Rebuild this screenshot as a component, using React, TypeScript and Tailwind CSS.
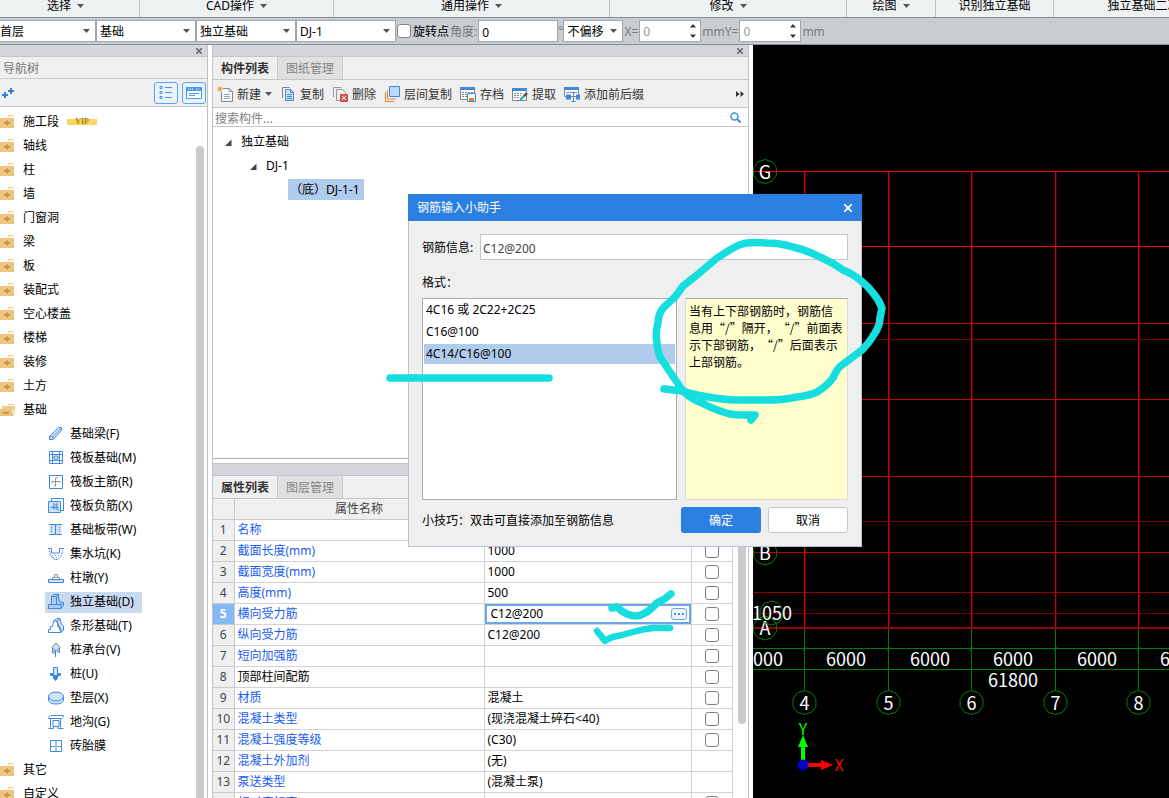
import type { ReactNode } from 'react';

const BLUE = '#4088d8';
const PALE = '#cfe2f7';

interface PropertyRow {
  name: string;
  value: string;
  check: boolean;
  plain?: boolean;
  editing?: boolean;
}

const ribbonGroups = [
  { label: '选择', width: 'w-[140px] pr-2', menu: true },
  { label: 'CAD操作', width: 'w-[194px]', menu: true },
  { label: '通用操作', width: 'w-[276px]', menu: true },
  { label: '修改', width: 'w-[237px]', menu: true },
  { label: '绘图', width: 'w-[89px]', menu: true },
  { label: '识别独立基础', width: 'w-[118px]', menu: false },
  { label: '独立基础二次编辑', width: 'w-[204px]', menu: false },
];

const categories = ['施工段', '轴线', '柱', '墙', '门窗洞', '梁', '板', '装配式', '空心楼盖', '楼梯', '装修', '土方'];

const rows: PropertyRow[] = [
  { name: '名称', value: 'DJ-1-1', check: false },
  { name: '截面长度(mm)', value: '1000', check: true },
  { name: '截面宽度(mm)', value: '1000', check: true },
  { name: '高度(mm)', value: '500', check: true },
  { name: '横向受力筋', value: 'C12@200', check: true, editing: true },
  { name: '纵向受力筋', value: 'C12@200', check: true },
  { name: '短向加强筋', value: '', check: true },
  { name: '顶部柱间配筋', value: '', check: true, plain: true },
  { name: '材质', value: '混凝土', check: true },
  { name: '混凝土类型', value: '(现浇混凝土碎石<40)', check: true },
  { name: '混凝土强度等级', value: '(C30)', check: true },
  { name: '混凝土外加剂', value: '(无)', check: false },
  { name: '泵送类型', value: '(混凝土泵)', check: false },
  { name: '相对底标高(m)', value: '', check: true },
];

function Icon({ children }: { children: ReactNode }) {
  return (
    <svg className="size-4 shrink-0" viewBox="0 0 16 16" fill="none" stroke={BLUE} aria-hidden="true">
      {children}
    </svg>
  );
}

function Caret({ className = '' }: { className?: string }) {
  return (
    <svg className={`h-1 w-[7px] shrink-0 ${className}`} viewBox="0 0 7 4" aria-hidden="true">
      <path d="M0 0h7L3.5 4z" fill="#555" />
    </svg>
  );
}

const foundations = [
  {
    label: '基础梁(F)',
    icon: <><path d="M1.5 10.500 10.500 1.500h3v3L5 13.500H1.500z" fill={PALE} /><path d="M1.500 10.500H5v3M5 10.500l8.500-8.500" strokeWidth=".8" /></>,
  },
  {
    label: '筏板基础(M)',
    icon: <><path d="M1.500 1.500h13v12h-13z" /><path d="M4.500 1.500v12M11.500 1.500v12M1.500 4.500h13M1.500 10.500h13" /><path d="M6 6h4v3H6z" fill={PALE} /></>,
  },
  {
    label: '筏板主筋(R)',
    icon: <><path d="M1.500 1.500h13v13h-13z" /><path d="M9.500 4h-2v8H6M4 9.500v-2h8v1.500" stroke="#8b949c" /></>,
  },
  {
    label: '筏板负筋(X)',
    icon: <><path d="M3.500 3V.5h12v12H13" /><path d="M.5 3.500h12v11H.5z" fill={PALE} /><path d="M4 9h2V5M6 12V9M2.500 9.500h8M9 5v7M7 7h2M9 12h2" /></>,
  },
  {
    label: '基础板带(W)',
    icon: <><path d="M1.500 2.500h12v10h-12z" fill={PALE} stroke="none" /><path d="M1 2.500h13M1 12.500h13M7.500 2.500v10" /><path d="M3.500 5v6M11.500 5v6" strokeDasharray="1 1" /></>,
  },
  {
    label: '集水坑(K)',
    icon: <><path d="M0 2.500h3.500V7h8V2.500H16" /><path d="M1.500 4.500l1 5 3.500 4h4l3.500-4 1-5" strokeDasharray="2 1" /><path d="M4 9.500h8M5 11.500h6" stroke="#8b949c" strokeDasharray="1 2" /></>,
  },
  {
    label: '柱墩(Y)',
    icon: <><path d="M.5 9.500h15v3H.5z" fill={PALE} /><path d="M4.500 9.500v-2h7v2M6.500 7.500v-3h3v3" stroke="#8b949c" /></>,
  },
  {
    label: '独立基础(D)',
    icon: <><path d="M.5 10.500h3v-8l2-2h5l.5 7 4.500 1v3l-2.500 3H.5z" fill="#a9cdf4" /><path d="M3.500 2.500h5l2-2M8.500 2.500v8h4.500v4M3.500 10.500h5M13 10.500l2-2" /></>,
  },
  {
    label: '条形基础(T)',
    icon: <><path d="M9 3l3-2.500 1.500 6 2 1.500v4L13 14.500z" fill={PALE} /><path d="M.5 14.500v-3h2v-3h2l1-5.500L9 .5h3M5.500 3H9l1 6h2v2.500h1v3H.5" /></>,
  },
  {
    label: '桩承台(V)',
    icon: <><path d="M8 1l4 4.500L8 9 4 5.500z" fill={PALE} stroke="#6f8ca8" /><path d="M4.500 6v5M11.500 6v5M7.500 9v6M6 8v4M10 8v3" /></>,
  },
  {
    label: '桩(U)',
    icon: <><path d="M2 7h11v2.500l-3 1v2L7.500 15 5 12.500v-2l-3-1z" fill={BLUE} stroke="none" /><path d="M5.500 1.500h4v8h-4z" fill={PALE} /></>,
  },
  {
    label: '垫层(X)',
    icon: <><path d="M.5 6v4c0 2.500 3 4 7.500 4s7.500-1.500 7.500-4V6" fill={PALE} /><ellipse cx="8" cy="6.500" rx="7.500" ry="4.500" fill={PALE} /></>,
  },
  {
    label: '地沟(G)',
    icon: <><path d="M.5 3.500l2-2h13v1l-2 2H.5zM2.500 4.500v9M12.500 4.500v9M5 6.500h6v6H5z" /><path d="M.5 14.500h5v-2M10 12.500v2h5.500" /></>,
  },
  {
    label: '砖胎膜',
    icon: <><path d="M2.500 2.500h11v11h-11zM8 2.500v11" /><path d="M5 8.500h6" strokeDasharray="2 2" /><path d="M2.500 8.500h2M11.500 8.500h2" /></>,
  },
];

const tools = [
  {
    label: '新建',
    menu: true,
    icon: <><path d="M6 2.500h6l3.500 3v10h-11V6" stroke="#7a8794" fill="#f7f7f7" /><path d="M12 2.500v3h3M7 8.500h6M7 10.500h6M7 12.500h6" stroke="#9ba5ae" /><path d="M1 1l4 4M5 1L1 5M3 .5v5M.5 3h5" stroke="#f19a24" /></>,
  },
  {
    label: '复制',
    icon: <><path d="M2.500 12V1.500h7" stroke="#7a8794" /><path d="M5.500 3.500h5l3 3v8h-8z" fill={PALE} /><path d="M10.500 3.500v3h3M7 8.500h5M7 10.500h5M7 12.500h5" /></>,
  },
  {
    label: '删除',
    icon: <><path d="M1.500 11V1.500h8" stroke="#9199a1" /><path d="M4.500 3.500h6l3 3V9M8 14.500H4.500v-11" stroke="#9199a1" /><path d="M8.500 8.500h7v7h-7z" fill="#d9534f" stroke="#c9504c" /><path d="M10 10l4 4M14 10l-4 4" stroke="#fff" /></>,
  },
  {
    label: '层间复制',
    icon: <><path d="M1.500 6v9.500H10" stroke="#f07f2d" /><path d="M3.500 4v9H12" stroke="#f07f2d" /><path d="M5.500.5h10v10h-10z" fill="#bcd8fa" /></>,
  },
  {
    label: '存档',
    icon: <><path d="M.5 1.500h14v12H.5z" stroke="#7a8794" fill="#fff" /><path d="M0 1h15v3H0z" fill={BLUE} stroke="none" /><path d="M2 6.500h11M2 8.500h5M2 10.500h5" stroke="#7a8794" strokeDasharray="2 1" /><path d="M7.500 7.500h8v8h-8z" fill="#fff" /><path d="M9 12h5v3H9z" fill="#f07f2d" stroke="none" /></>,
  },
  {
    label: '提取',
    icon: <><path d="M.5 2.500h14v12H.5z" stroke="#7a8794" fill="#fff" /><path d="M0 2h15v3H0z" fill={BLUE} stroke="none" /><path d="M2 7.500h9M2 9.500h7M2 11.500h5" stroke="#7a8794" strokeDasharray="2 1" /><path d="M8 14l5-5" stroke="#1ca7b8" strokeWidth="2" /><path d="M12 10l3-3" stroke="#555" strokeWidth="2.500" /></>,
  },
  {
    label: '添加前后缀',
    icon: <><path d="M.5 1.500h14v9H.5z" stroke="#7a8794" fill="#fff" /><path d="M0 1h15v3H0z" fill={BLUE} stroke="none" /><path d="M2 6.500h11" stroke="#7a8794" strokeDasharray="3 1" /><path d="M2 8.500h5v5H2zM12 8.500h4v5h-4z" fill={BLUE} stroke="none" /><path d="M7.500 6.500h4M9.500 6.500v9M7.500 15.500h4" /></>,
  },
];

function Ribbon() {
  return (
    <nav className="flex h-[18px] shrink-0 items-stretch overflow-hidden border-b border-[#878d92] bg-[#eff2f3]">
      {ribbonGroups.map(group => (
        <div
          key={group.label}
          className={`flex shrink-0 items-end justify-center border-r border-[#bfc3c6] pb-px ${group.width}`}
        >
          <button type="button" className="flex items-center gap-1.5 whitespace-nowrap leading-5">
            {group.label}
            {group.menu && <Caret />}
          </button>
        </div>
      ))}
    </nav>
  );
}

function Combo({ label, value, width }: { label: string; value: string; width: string }) {
  return (
    <div className={`relative h-[22px] shrink-0 ${width}`}>
      <select aria-label={label} className="size-full appearance-none border border-[#a3a5a8] bg-white pl-[3px] pr-3 pt-0.5 outline-none">
        <option>{value}</option>
      </select>
      <Caret className="pointer-events-none absolute right-1.5 top-[9px]" />
    </div>
  );
}

function Spin({ label }: { label: string }) {
  return (
    <div className="flex h-[22px] w-[62px] shrink-0 items-center border border-[#a3a5a8] bg-white pr-1">
      <input aria-label={label} defaultValue="0" className="w-full min-w-0 pl-[3px] pt-0.5 text-[#9a9a9a] outline-none" />
      <svg className="h-3.5 w-1.5 shrink-0" viewBox="0 0 6 14" fill="#333" aria-hidden="true">
        <path d="M0 3.500h6L3 0zM0 10.500h6L3 14z" />
      </svg>
    </div>
  );
}

function OptionsBar() {
  return (
    <div className="flex h-[27px] shrink-0 items-center overflow-hidden whitespace-nowrap border-b border-[#8d9094] bg-[#c9ccd1] text-[#76797d]">
      <div className="-ml-1 flex text-black">
        <Combo label="楼层" value="首层" width="w-[100px]" />
        <Combo label="构件类别" value="基础" width="w-[100px]" />
        <Combo label="构件类型" value="独立基础" width="w-[100px]" />
        <Combo label="构件" value="DJ-1" width="w-[100px]" />
      </div>
      <label className="ml-px flex items-center gap-0.5 text-black">
        <input type="checkbox" className="size-3.5 appearance-none rounded-[3px] border border-[#808286] bg-white" />
        <span className="pt-0.5">旋转点</span>
      </label>
      <label htmlFor="angle" className="px-px pt-0.5">角度:</label>
      <input id="angle" defaultValue="0" className="h-[22px] w-20 border border-[#a3a5a8] bg-white px-[3px] pt-0.5 text-black outline-none" />
      <span>°</span>
      <div className="text-black">
        <Combo label="偏移方式" value="不偏移" width="w-[60px]" />
      </div>
      <span className="px-px pt-0.5">X=</span>
      <Spin label="X 偏移" />
      <span className="px-px pt-0.5">mmY=</span>
      <Spin label="Y 偏移" />
      <span className="px-px pt-0.5">mm</span>
    </div>
  );
}

function PanelBar() {
  return (
    <div className="flex h-3 shrink-0 items-center justify-end border-b border-[#c3c5ca] bg-[#d4d6dc] pr-[5px]">
      <button type="button" aria-label="关闭面板">
        <svg className="size-1.5" viewBox="0 0 6 6" stroke="#666" strokeWidth="1.500"><path d="M0 0l6 6M6 0L0 6" /></svg>
      </button>
    </div>
  );
}

function Folder({ open = false }: { open?: boolean }) {
  if (open) {
    return (
      <svg className="h-3.5 w-[15px] shrink-0" viewBox="0 0 15 14" aria-hidden="true">
        <path d="M8 1h6v1H8zM2 3h13v9l-2-6H2z" fill="#eecb86" />
        <path d="M0 6h12l2 7H0z" fill="#ecc379" />
        <path d="M3 9h6v1.500H3z" fill="#b98b2f" />
      </svg>
    );
  }
  return (
    <svg className="h-3.5 w-[15px] shrink-0" viewBox="0 0 15 14" aria-hidden="true">
      <path d="M7.500 1.500 8.500 0H13l1 1.500z" fill="#f0cf90" />
      <path d="M0 3h13q1 0 1 1v8q0 1-1 1H0z" fill="#ecc57e" />
      <path d="M6 5.500h2V7h2v2H8v1.500H6V9H4V7h2z" fill="#c79a3f" />
    </svg>
  );
}

function TreeRow({ label, open, vip }: { label: string; open?: boolean; vip?: boolean }) {
  return (
    <li className="flex h-6 items-center gap-2">
      <Folder open={open} />
      <span>{label}</span>
      {vip && (
        <span className="h-1.5 w-[30px] bg-[#fbd65c] text-center font-['Liberation_Serif',serif] text-[8px] font-bold leading-[6px] text-[#a8811c]">
          VIP
        </span>
      )}
    </li>
  );
}

function NavigationTree() {
  return (
    <aside className="flex w-52 shrink-0 flex-col border-r border-[#bfc1c8] bg-white">
      <PanelBar />
      <h2 className="h-[22px] shrink-0 border-b border-[#c8cace] bg-[#efefef] pl-[3px] leading-[23px] text-[#777]">导航树</h2>
      <div className="flex h-7 shrink-0 items-center gap-1 border-b border-[#c3c5ca] bg-[#efefef] pl-0.5 pr-px">
        <button type="button" aria-label="添加" className="mr-auto">
          <svg className="h-2.5 w-3" viewBox="0 0 12 10" stroke="#3c80cd" strokeWidth="2"><path d="M0 7h6M3 4v6M6 3h6M9 0v6" /></svg>
        </button>
        <button type="button" aria-label="列表视图" className="flex h-[22px] w-6 items-center justify-center rounded-[3px] border border-[#5ba3ee] bg-[#e9f3fd]">
          <svg className="size-3.5" viewBox="0 0 14 14" fill="none" stroke="#4a98ec">
            <path d="M1 .5h2v2H1zM1 5.500h2v2H1zM1 10.500h2v2H1zM6 1.500h7M6 6.500h7M6 11.500h7" />
          </svg>
        </button>
        <button type="button" aria-label="面板视图" className="flex h-[22px] w-6 items-center justify-center rounded-[3px] border border-[#5ba3ee] bg-[#e9f3fd]">
          <svg className="h-3.5 w-4" viewBox="0 0 16 14" fill="none" stroke="#4a98ec">
            <path d="M.5 1.500h15v11H.5z" fill="#fff" />
            <path d="M0 1h16v4H0z" fill="#4a98ec" stroke="none" />
            <path d="M2 3h6M10 3h4" stroke="#fff" strokeDasharray="1 1" />
            <path d="M3 7.500h10M3 9.500h6" />
          </svg>
        </button>
      </div>
      <div className="flex min-h-0 grow overflow-hidden pt-[3px]">
        <ul className="grow">
          {categories.map(name => (
            <TreeRow key={name} label={name} vip={name === '施工段'} />
          ))}
          <TreeRow label="基础" open />
          {foundations.map(item => (
            <li key={item.label} className="flex h-6 items-center pl-[45px]">
              <span className={`flex h-[21px] items-center gap-1.5 px-[3px] pr-2 ${item.label === '独立基础(D)' ? 'bg-[#c9d9f0]' : ''}`}>
                <Icon>{item.icon}</Icon>
                {item.label}
              </span>
            </li>
          ))}
          <TreeRow label="其它" />
          <TreeRow label="自定义" />
        </ul>
        <div className="mr-[3px] mt-9 w-2 rounded-t bg-[#cbcbcb]" />
      </div>
    </aside>
  );
}

function Tabs({ active, other }: { active: string; other: string }) {
  return (
    <div role="tablist" className="flex h-[23px] shrink-0 border-b border-[#c3c5ca] bg-[#efefef]">
      <button role="tab" type="button" aria-selected="true" className="w-16 pt-0.5 font-bold text-[#333]">{active}</button>
      <button role="tab" type="button" aria-selected="false" className="w-[66px] border-x border-[#c8cace] bg-[#e0e0e1] pt-0.5 text-[#858585]">{other}</button>
    </div>
  );
}

function Expander() {
  return (
    <svg className="size-[7px]" viewBox="0 0 7 7" aria-hidden="true"><path d="M0 7 6.500.5V7z" fill="#444" /></svg>
  );
}

function ComponentList() {
  return (
    <section className="flex h-[414px] shrink-0 flex-col">
      <PanelBar />
      <Tabs active="构件列表" other="图纸管理" />
      <div className="flex h-7 shrink-0 items-center gap-2 border-b border-[#c3c5ca] bg-[#efefef] pl-1 pr-1 text-[#333]">
        {tools.map(tool => (
          <button key={tool.label} type="button" className="flex shrink-0 items-center gap-1">
            <Icon>{tool.icon}</Icon>
            <span className="pt-0.5">{tool.label}</span>
            {tool.menu && <Caret />}
          </button>
        ))}
        <button type="button" aria-label="更多" className="ml-auto">
          <svg className="h-1.5 w-2" viewBox="0 0 8 6" fill="#333"><path d="M0 0l3.500 3L0 6zM4.500 0 8 3 4.500 6z" /></svg>
        </button>
      </div>
      <div className="flex h-[19px] shrink-0 items-center border-b border-[#c3c5ca] bg-white pr-[7px]">
        <input aria-label="搜索构件" placeholder="搜索构件..." className="h-full grow pl-0.5 pt-0.5 outline-none placeholder:text-[#808080]" />
        <svg className="size-[11px]" viewBox="0 0 11 11" fill="none" stroke="#3d93cc" strokeWidth="1.500" aria-hidden="true">
          <circle cx="4.500" cy="4.500" r="3.500" /><path d="M7 7l3.500 3.500" strokeWidth="2" />
        </svg>
      </div>
      <ul className="grow border-b border-[#a9abad] bg-white pt-0.5">
        <li className="flex h-6 items-center gap-[9px] pl-3 pt-0.5"><Expander />独立基础</li>
        <li className="flex h-6 items-center gap-[9px] pl-[37px] pt-0.5"><Expander />DJ-1</li>
        <li className="flex h-6 items-center pl-[75px]">
          <span className="h-[21px] bg-[#b1cbec] pl-0.5 pr-1 leading-[21px] [text-spacing-trim:space-all]">（底）DJ-1-1</span>
        </li>
      </ul>
    </section>
  );
}

function PropertyTable() {
  return (
    <table className="w-[519px] shrink-0 table-fixed border-collapse self-start bg-white">
      <colgroup>
        <col className="w-[21px]" />
        <col className="w-[250px]" />
        <col className="w-[207px]" />
        <col className="w-[41px]" />
      </colgroup>
      <thead>
        <tr className="h-5 bg-[#efefef] text-[#444]">
          <th className="border-b border-r border-[#c8cace] p-0" aria-label="序号" />
          <th className="border-b border-r border-[#c8cace] p-0 font-normal">属性名称</th>
          <th className="border-b border-r border-[#c8cace] p-0 font-normal">属性值</th>
          <th className="border-b border-r border-[#c8cace] p-0 font-normal">附加</th>
        </tr>
      </thead>
      <tbody>
        {rows.map((row, index) => (
          <tr key={row.name} className="h-[21px]">
            <td className={`border-b border-r border-[#c8cace] p-0 text-center ${row.editing ? 'bg-[#84b9f5] font-bold text-white' : 'bg-[#efefef] text-[#444]'}`}>
              {index + 1}
            </td>
            <td className={`border-b border-r border-[#d3d3d5] p-0 pl-[3px] ${row.plain ? 'text-black' : 'text-[#1a5cf0]'}`}>{row.name}</td>
            <td className={`border-b border-r border-[#d3d3d5] p-0 ${row.editing ? '' : 'pl-[3px]'}`}>
              {row.editing ? (
                <div className="flex h-5 items-center border-2 border-[#6ba6e6] bg-white pl-1 pr-0.5">
                  <input aria-label={row.name} defaultValue={row.value} className="h-4 min-w-0 grow outline-none" />
                  <button type="button" aria-label="钢筋输入" className="flex h-3 w-4 items-center justify-center rounded-[3px] border border-[#6ba6e6] bg-[#edf5fd]">
                    <svg className="h-0.5 w-2.5" viewBox="0 0 10 2" fill="#4a90dc"><path d="M0 0h2v2H0zM4 0h2v2H4zM8 0h2v2H8z" /></svg>
                  </button>
                </div>
              ) : (
                row.value
              )}
            </td>
            <td className="border-b border-r border-[#d3d3d5] p-0">
              {row.check && (
                <input type="checkbox" aria-label={`${row.name}附加`} className="mx-auto block size-3.5 appearance-none rounded-[3px] border border-[#808080] bg-white" />
              )}
            </td>
          </tr>
        ))}
      </tbody>
    </table>
  );
}

function PropertyPanel() {
  return (
    <section className="flex min-h-0 grow flex-col">
      <div className="h-[13px] shrink-0 border-b border-t border-[#c3c5ca] bg-[#d4d6dc]" />
      <Tabs active="属性列表" other="图层管理" />
      <div className="flex min-h-0 grow gap-[5px] overflow-hidden bg-white">
        <PropertyTable />
        <div className="h-[225px] w-2 rounded bg-[#cbcbcb]" />
      </div>
    </section>
  );
}

const columns = [51.5, 135.5, 218.5, 302.5, 385.5];
const gridLines = [
  { y: 126.5, color: '#ff0000' },
  { y: 201.5, color: '#ff0000' },
  { y: 278.5, color: '#cc0000' },
  { y: 294.5, color: '#6e0000' },
  { y: 354.5, color: '#cc0000' },
  { y: 431.5, color: '#cc0000' },
  { y: 476.5, color: '#6e0000' },
  { y: 507.5, color: '#b40000' },
  { y: 547.5, color: '#960000' },
  { y: 568.5, color: '#6e0000' },
];

function Bubble({ x, y, text }: { x: number; y: number; text?: string }) {
  const points = Array.from({ length: 10 }, (_, i) => {
    const a = (i * Math.PI) / 5 - Math.PI / 2;
    return `${x + 12 * Math.cos(a)},${y + 12 * Math.sin(a)}`;
  }).join(' ');
  return (
    <>
      <polygon points={points} fill="none" stroke="#008000" />
      {text && <text x={x} y={y + 7} stroke="none">{text}</text>}
    </>
  );
}

function DrawingCanvas() {
  return (
    <main className="min-w-0 grow overflow-hidden bg-black">
      <svg
        className="size-full font-['Noto_Sans_CJK_SC',sans-serif] text-[18px]"
        fill="#fff"
        textAnchor="middle"
        role="img"
        aria-label="轴网"
      >
        {columns.map(x => (
          <g key={x}>
            <path d={`M${x + 1} 127V583`} stroke="#4a0000" />
            <path d={`M${x} 127V583`} stroke="#d40000" />
            <path d={`M${x} 584V646M${x - 2} 606l4-4`} stroke="#008000" />
          </g>
        ))}
        {gridLines.map(line => (
          <line key={line.y} x1="0" x2="100%" y1={line.y} y2={line.y} stroke={line.color} />
        ))}
        <line x1="0" x2="100%" y1="583" y2="583" stroke="#960000" strokeWidth="2" />
        <line x1="0" x2="100%" y1="603.500" y2="603.500" stroke="#008000" />
        <line x1="0" x2="100%" y1="624.500" y2="624.500" stroke="#008000" />
        <Bubble x={12} y={126.5} text="G" />
        <Bubble x={12} y={508} text="B" />
        <Bubble x={12} y={583} text="A" />
        <Bubble x={18.5} y={568} />
        <text x="19" y="575">1050</text>
        {columns.map((x, i) => (
          <Bubble key={x} x={x} y={657.5} text={String(i + 4)} />
        ))}
        {[10, 93, 177, 260, 344, 427].map(x => (
          <text key={x} x={x} y="621">6000</text>
        ))}
        <text x="260" y="642">61800</text>
        <g className="text-[16px]">
          <path d="M48 720v-18h-3l5-12 5 12h-3v18z" fill="#00ff00" />
          <path d="M50 718h18v-3l12 5-12 5v-3H50z" fill="#ff0000" />
          <circle cx="50" cy="720" r="5.500" fill="#0000c0" />
          <text x="50" y="690" fill="#00ff00">Y</text>
          <text x="86" y="726" fill="#ff0000">X</text>
        </g>
      </svg>
    </main>
  );
}

function RebarDialog() {
  return (
    <div role="dialog" aria-label="钢筋输入小助手" className="absolute left-[408px] top-[194px] w-[454px] border border-[#b9c3d3] bg-[#efefef]">
      <header className="-mx-px -mt-px flex h-[27px] items-center justify-between bg-[#2b7fe1] pl-[9px] pr-2.5 text-white">
        钢筋输入小助手
        <button type="button" aria-label="关闭">
          <svg className="size-2" viewBox="0 0 8 8" stroke="#fff" strokeWidth="1.800"><path d="M0 0l8 8M8 0L0 8" /></svg>
        </button>
      </header>
      <div className="px-[13px] pb-[13px] pt-[13px]">
        <div className="flex items-center">
          <label htmlFor="rebar" className="w-[58px] pt-0.5">钢筋信息:</label>
          <input id="rebar" defaultValue="C12@200" className="h-[26px] min-w-0 grow border border-[#c3c5cc] bg-white px-0.5 pt-0.5 text-[#444] outline-none" />
        </div>
        <p className="pb-1.5 pt-[14px] leading-[18px]">格式：</p>
        <div className="flex h-[202px] gap-2">
          <ul className="w-[255px] border border-[#a9abad] bg-white px-px">
            <li className="my-px h-5 px-0.5 leading-5">4C16 或 2C22+2C25</li>
            <li className="my-0.5 h-5 px-0.5 leading-5">C16@100</li>
            <li className="my-0.5 h-5 bg-[#b1cbec] px-0.5 leading-5">4C14/C16@100</li>
          </ul>
          <p className="grow border border-[#d8d9de] border-t-[#a9abad] bg-[#ffffcd] px-[3px] py-[3px] font-['Noto_Sans_CJK_SC',sans-serif] leading-[17px] [text-spacing-trim:space-all]">
            <span className="block whitespace-nowrap">当有上下部钢筋时，钢筋信</span>
            <span className="block whitespace-nowrap">息用“/”隔开，“/”前面表</span>
            <span className="block whitespace-nowrap">示下部钢筋，“/”后面表示</span>
            <span className="block whitespace-nowrap">上部钢筋。</span>
          </p>
        </div>
        <div className="mt-[7px] flex items-center gap-[7px]">
          <p className="grow pt-0.5">小技巧：双击可直接添加至钢筋信息</p>
          <button type="button" className="h-[26px] w-20 rounded-[3px] bg-[#2b7fe1] pt-0.5 text-white">确定</button>
          <button type="button" className="h-[26px] w-20 rounded-[3px] border border-[#c6c8cc] bg-white pt-0.5">取消</button>
        </div>
      </div>
    </div>
  );
}

// freehand marks drawn over the whole window
function InkLayer() {
  return (
    <svg
      className="pointer-events-none absolute inset-0 size-full"
      fill="none"
      stroke="#17dede"
      strokeWidth="7.500"
      strokeLinecap="round"
      strokeLinejoin="round"
      aria-hidden="true"
    >
      <path d="M390 378H549" />
      <path d="M664 389L683 391Q700 397 733 400L767 400Q785 400 797 397Q808 396 817 392Q827 386 833 378Q837 368 842 365L862 350Q870 342 875 333Q880 325 880 318L882 308Q879 300 873 293Q868 286 860 280Q853 274 843 270Q832 262 820 257Q806 250 793 247Q780 243 767 243Q755 242 747 243Q740 244 735 247Q726 252 717 258L697 275L683 286L675 297L663 308Q658 315 658 323Q655 333 657 343Q657 350 660 357L670 372L683 391Q691 399 702 403Q711 408 720 411Q731 415 740 415L755 415L751 420" />
      <path d="M612 608L617 607Q622 612 627 614Q632 616 637 616Q642 615 647 612Q652 608 657 603Q664 600 671 594" />
      <path d="M597 631L605 641Q609 638 613 637Q623 635 633 632Q643 629 653 628L670 628" strokeWidth="6.500" />
    </svg>
  );
}

export default function App() {
  return (
    <div
      lang="zh-CN"
      className="relative flex h-screen flex-col overflow-hidden bg-white font-['Noto_Sans','Noto_Sans_CJK_SC',sans-serif] text-[12px] leading-[18px] text-black"
    >
      <Ribbon />
      <OptionsBar />
      <div className="flex min-h-0 grow">
        <NavigationTree />
        <div className="ml-1 mr-1 flex w-[537px] shrink-0 flex-col border-x border-[#bfc1c8] bg-white">
          <ComponentList />
          <div className="h-1 shrink-0" />
          <PropertyPanel />
        </div>
        <DrawingCanvas />
      </div>
      <RebarDialog />
      <InkLayer />
    </div>
  );
}
